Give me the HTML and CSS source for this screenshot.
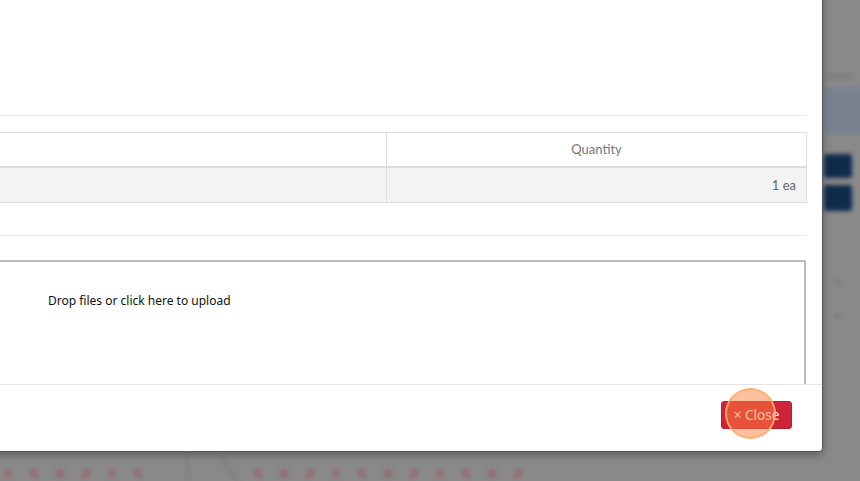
FILE: index.html
```html
<!DOCTYPE html>
<html lang="en">
<head>
<meta charset="utf-8">
<title>Modal</title>
<link rel="stylesheet" href="styles.css">
</head>
<body>
<div class="backdrop">
  <div class="side">
    <div class="side-label"></div>
    <div class="side-box"></div>
    <div class="side-btn"></div>
    <div class="side-btn second"></div>
    <div class="side-dot"></div>
    <div class="side-dot"></div>
  </div>
  <div class="bottom">
    <div class="dashes">
      <span></span><span></span><span></span><span></span><span></span><span></span>
    </div>
    <div class="vline"></div>
    <div class="diag"></div>
    <div class="dashes wide">
      <span></span><span></span><span></span><span></span><span></span><span></span><span></span><span></span><span></span><span></span><span></span>
    </div>
  </div>
</div>

<div class="modal">
  <div class="modal-body">
    <hr class="sep">
    <table class="items">
      <thead>
        <tr><th class="col-name"></th><th class="col-qty">Quantity</th></tr>
      </thead>
      <tbody>
        <tr><td class="col-name"></td><td class="col-qty num">1 ea</td></tr>
      </tbody>
    </table>
    <hr class="sep sep-2">
    <div class="dropzone">Drop files or click here to upload</div>
  </div>
  <div class="modal-footer">
    <button class="btn-close" type="button">× Close</button>
  </div>
</div>
<div class="click-ring"></div>
</body>
</html>
```

FILE: styles.css
```css
* { box-sizing: border-box; }
html, body { margin: 0; padding: 0; }
body {
  width: 860px;
  height: 481px;
  overflow: hidden;
  background: #898989;
  font-family: Lato, "Liberation Sans", sans-serif;
  position: relative;
}

/* blurred page behind the overlay */
.backdrop {
  position: absolute;
  inset: 0;
  filter: blur(2px);
}
.side {
  position: absolute;
  left: 824px;
  top: 0;
  width: 40px;
  display: flex;
  flex-direction: column;
  padding-top: 73px;
}
.side-label { height: 6px; width: 24px; margin-left: 4px; background: #7e7e7e; border-radius: 3px; }
.side-box { height: 46px; margin-top: 9px; background: #78838f; }
.side-btn { height: 24px; margin-top: 20px; width: 28px; background: #0f2c4d; border-radius: 3px; }
.side-btn.second { margin-top: 7px; height: 26px; }
.side-dot { width: 7px; height: 7px; margin: 68px 0 0 10px; border-radius: 50%; background: #808080; }
.side-dot + .side-dot { margin-top: 26px; }

.bottom {
  position: absolute;
  left: 0;
  top: 452px;
  width: 860px;
  height: 29px;
  display: flex;
  align-items: flex-end;
}
.dashes { display: flex; gap: 18px; padding: 0 0 0 4px; height: 12px; }
.dashes span { width: 8px; height: 9px; background: #946f74; border-radius: 3px; }
.dashes.wide { margin-left: 20px; gap: 18px; }
.vline { width: 2px; height: 29px; margin-left: 44px; background: #7d7d7d; align-self: stretch; }
.diag { width: 2px; height: 34px; margin-left: 40px; background: #7d7d7d; transform: rotate(-35deg); align-self: flex-start; }

/* modal */
.modal {
  position: absolute;
  left: -40px;
  top: -10px;
  width: 863px;
  height: 462px;
  background: #fff;
  border: 1px solid #555;
  border-radius: 4px;
  box-shadow: 0 3px 9px rgba(0,0,0,.3);
  display: flex;
  flex-direction: column;
  overflow: hidden;
}
.modal-body {
  height: 393px;
  overflow: hidden;
  padding: 124px 15px 0 25px;
  flex: none;
}
.sep {
  margin: 0 0 16px;
  border: 0;
  border-top: 1px solid #e9e9e9;
  height: 0;
}
.sep-2 { margin-top: 32px; margin-bottom: 24px; }

.items {
  width: 100%;
  border-collapse: collapse;
  border: 1px solid #dddddd;
  table-layout: fixed;
  font-size: 13px;
  color: #777;
}
.items th {
  font-weight: 400;
  height: 34px;
  border-bottom: 2px solid #dddddd;
  text-align: center;
  padding: 0 8px;
}
.items td {
  height: 36px;
  background: #f3f3f3;
  padding: 0 10px;
  color: #666;
}
.items .col-name { width: 400px; border-right: 1px solid #dddddd; }
.items .num { text-align: right; }

.dropzone {
  border: 2px solid #bcbcbc;
  border-left: 0;
  border-right-width: 2px;
  margin-right: 1px;
  height: 200px;
  padding: 31px 0 0 62px;
  font-size: 12px;
  color: #111;
  font-family: "Noto Sans", Lato, sans-serif;
  line-height: 16px;
}

.modal-footer {
  border-top: 1px solid #e5e5e5;
  flex: 1;
  display: flex;
  justify-content: flex-end;
  align-items: flex-start;
  padding: 16px 30px 0 0;
}
.btn-close {
  background: #cf2338;
  color: #fff;
  border: 1px solid #b81d30;
  border-radius: 3px;
  height: 28px;
  width: 71px;
  font-family: "Noto Sans", Lato, sans-serif;
  font-size: 13.5px;
  padding: 0;
  cursor: pointer;
}

.click-ring {
  position: absolute;
  left: 725px;
  top: 388px;
  width: 51px;
  height: 51px;
  border-radius: 50%;
  background: rgba(255, 130, 60, 0.5);
  border: 2px solid rgba(255, 175, 110, 0.85);
}
```
